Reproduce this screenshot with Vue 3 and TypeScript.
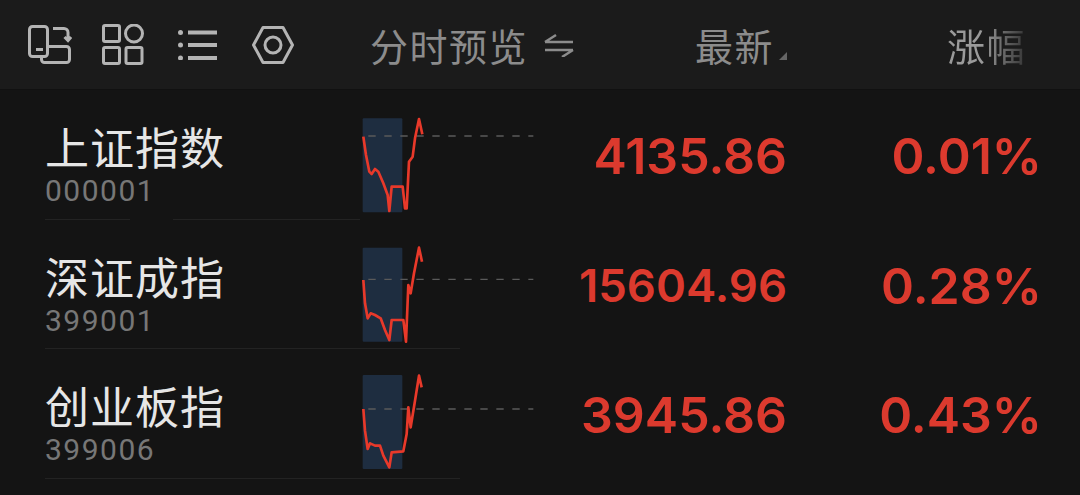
<script setup lang="ts">
interface Row {
  name: string
  code: string
  price: string
  pct: string
  line: string
  box: [number, number]
  dashY: number
}

// chart coordinates are in a 3x grid, see viewBox below
const rows: Row[] = [
  {
    name: '上证指数',
    code: '000001',
    price: '4135.86',
    pct: '0.01%',
    line: '70,95 78,150 88,200 95,207 105,192 115,200 130,235 143,270 148,318 155,245 188,245 195,310 200,310 207,170 218,155 225,100 237,42 247,88',
    box: [40, 322],
    dashY: 93,
  },
  {
    name: '深证成指',
    code: '399001',
    price: '15604.96',
    pct: '0.28%',
    line: '70,135 75,205 83,250 92,235 105,240 122,250 135,285 148,315 155,255 190,255 198,320 205,150 212,175 222,115 237,38 246,80',
    box: [38, 320],
    dashY: 133,
  },
  {
    name: '创业板指',
    code: '399006',
    price: '3945.86',
    pct: '0.43%',
    line: '70,135 75,200 83,255 90,238 105,245 120,245 130,275 148,310 155,265 190,262 200,210 205,130 212,190 225,110 237,35 245,70',
    box: [33, 315],
    dashY: 135,
  },
]
</script>

<template>
  <div class="page">
    <header class="head">
      <div class="tools">
        <svg class="tool tool--swap" viewBox="0 0 44 40" fill="none">
          <rect x="1.5" y="1.5" width="18" height="30" rx="3" />
          <path d="M8 24.5h7" />
          <path d="M19.500 21.500h19a3 3 0 0 1 3 3v10a3 3 0 0 1-3 3h-22a3 3 0 0 1-3-3v-2.500" />
          <path d="M25 3.500h11a4 4 0 0 1 4 4v7M36.500 12l3.500 3.500 3-3.500" />
        </svg>
        <svg class="tool tool--apps" viewBox="0 0 42 41" fill="none">
          <rect x="1.500" y="1.500" width="16" height="16" rx="1.500" />
          <circle cx="32" cy="9.500" r="8.500" />
          <rect x="1.500" y="23.500" width="16" height="16" rx="1.500" />
          <rect x="24" y="23.500" width="16" height="16" rx="1.500" />
        </svg>
        <svg class="tool tool--list" viewBox="0 0 40 30" fill="none">
          <circle class="dot" cx="2.500" cy="2.500" r="2.500" />
          <circle class="dot" cx="2.500" cy="15" r="2.500" />
          <circle class="dot" cx="2.500" cy="28" r="2.500" />
          <path d="M10 2.500h29M10 15h29M10 28h29" />
        </svg>
        <svg class="tool tool--gear" viewBox="0 0 42 38" fill="none">
          <path d="M11 1.500h20l9.500 17.500-9.500 17.500h-20l-9.500-17.500z" stroke-linejoin="round" />
          <circle cx="21" cy="19" r="8" />
        </svg>
      </div>
      <div class="head-preview">
        <span>分时预览</span>
        <svg class="switch" viewBox="0 0 30 24" fill="none">
          <path d="M1 9h28M1 9l11-7M1 17h28M29 17l-11 7" />
        </svg>
      </div>
      <div class="head-latest">
        <span>最新</span>
        <i class="sort"></i>
      </div>
      <div class="head-change">涨幅</div>
    </header>

    <div v-for="row in rows" :key="row.code" class="row">
      <div class="title">
        <div class="name">{{ row.name }}</div>
        <div class="code">{{ row.code }}</div>
      </div>
      <svg class="chart" viewBox="60 15 540 330" fill="none">
        <rect x="68" :y="row.box[0]" width="119" :height="row.box[1] - row.box[0]" rx="3" class="chart-box" />
        <path :d="`M85 ${row.dashY}H580`" class="chart-base" />
        <polyline :points="row.line" class="chart-line" />
      </svg>
      <div class="price" :class="{ 'price--long': row.price.length > 7 }">{{ row.price }}</div>
      <div class="pct">{{ row.pct }}</div>
    </div>
  </div>
</template>

<style>
body {
  background: #141414;
}
</style>

<style scoped>
.page {
  width: 1080px;
  height: 495px;
  overflow: hidden;
  background: #141414;
  font-family: "Noto Sans CJK SC", "Noto Sans", sans-serif;
}
.head {
  display: flex;
  align-items: center;
  height: 89px;
  background: #1b1b1b;
  border-bottom: 1px solid #111;
  color: #8c8c8c;
  font-size: 38px;
}
.tools {
  display: flex;
  align-items: center;
  width: 370px;
  padding-left: 28px;
  box-sizing: border-box;
}
.tool {
  flex: none;
  stroke: #b4b4b4;
  stroke-width: 3;
}
.tool--swap { width: 44px; height: 40px; }
.tool--apps { width: 42px; height: 41px; margin-left: 30px; }
.tool--list { width: 40px; height: 30px; margin-left: 34px; }
.tool--list .dot { fill: #b4b4b4; stroke: none; }
.tool--list path { stroke-width: 4; }
.tool--gear { width: 42px; height: 38px; margin-left: 34px; }
.head-preview {
  display: flex;
  align-items: center;
  width: 325px;
  letter-spacing: 1.500px;
}
.switch {
  width: 30px;
  height: 24px;
  margin-left: 16px;
  stroke: #8c8c8c;
  stroke-width: 2.500;
}
.head-latest {
  position: relative;
  width: 252px;
  letter-spacing: 1.500px;
}
.sort {
  position: absolute;
  left: 84px;
  bottom: 12px;
  width: 0;
  height: 0;
  border-left: 8px solid transparent;
  border-bottom: 8px solid #666;
}
.head-change {
  letter-spacing: 1.500px;
  background: linear-gradient(90deg, #9a9a9a 45%, #343434 100%);
  -webkit-background-clip: text;
  background-clip: text;
  color: transparent;
}
.row {
  position: relative;
  display: flex;
  box-sizing: border-box;
  height: 129.500px;
  padding: 20px 38px 0 45px;
}
.row::after {
  content: "";
  position: absolute;
  left: 45px;
  right: 620px;
  bottom: 0;
  height: 1px;
  background: #232323;
}
.row:first-of-type::after {
  right: 720px;
  background: linear-gradient(90deg, #232323 85px, transparent 85px, transparent 128px, #232323 128px);
}
.title {
  width: 315px;
  flex: none;
}
.name {
  margin-top: 16px;
  color: #e6e6e6;
  font-size: 44px;
  line-height: 40px;
  letter-spacing: 1px;
}
.code {
  margin-top: 8px;
  color: #777;
  font-family: Roboto, sans-serif;
  font-size: 30px;
  line-height: 34px;
  letter-spacing: 1.500px;
}
.chart {
  flex: none;
  width: 180px;
  height: 110px;
}
.chart-box {
  fill: #1e2d40;
}
.chart-base {
  stroke: #5a5a5a;
  stroke-width: 4;
  stroke-dasharray: 22 26;
}
.chart-line {
  stroke: #e8392a;
  stroke-width: 8;
  stroke-linejoin: round;
}
.price,
.pct {
  margin-top: 24px;
  color: #dc3a2e;
  font-family: Inter, Roboto, sans-serif;
  font-size: 50px;
  line-height: 44px;
  font-weight: 600;
  text-align: right;
}
.price {
  width: 247px;
  flex: none;
}
.price--long {
  font-size: 45.500px;
}
.pct {
  flex: 1;
}
</style>
